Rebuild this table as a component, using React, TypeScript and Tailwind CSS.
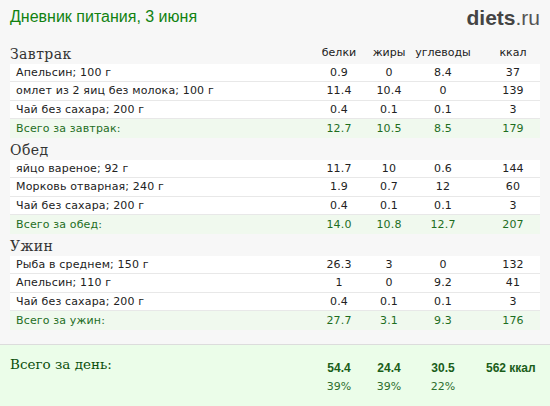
import React from 'react';

type Row = { name: string; p: string; f: string; c: string; k: string };
type Meal = { title: string; rows: Row[]; total: Row };

const meals: Meal[] = [
  {
    title: 'Завтрак',
    rows: [
      { name: 'Апельсин; 100 г', p: '0.9', f: '0', c: '8.4', k: '37' },
      { name: 'омлет из 2 яиц без молока; 100 г', p: '11.4', f: '10.4', c: '0', k: '139' },
      { name: 'Чай без сахара; 200 г', p: '0.4', f: '0.1', c: '0.1', k: '3' },
    ],
    total: { name: 'Всего за завтрак:', p: '12.7', f: '10.5', c: '8.5', k: '179' },
  },
  {
    title: 'Обед',
    rows: [
      { name: 'яйцо вареное; 92 г', p: '11.7', f: '10', c: '0.6', k: '144' },
      { name: 'Морковь отварная; 240 г', p: '1.9', f: '0.7', c: '12', k: '60' },
      { name: 'Чай без сахара; 200 г', p: '0.4', f: '0.1', c: '0.1', k: '3' },
    ],
    total: { name: 'Всего за обед:', p: '14.0', f: '10.8', c: '12.7', k: '207' },
  },
  {
    title: 'Ужин',
    rows: [
      { name: 'Рыба в среднем; 150 г', p: '26.3', f: '3', c: '0', k: '132' },
      { name: 'Апельсин; 110 г', p: '1', f: '0', c: '9.2', k: '41' },
      { name: 'Чай без сахара; 200 г', p: '0.4', f: '0.1', c: '0.1', k: '3' },
    ],
    total: { name: 'Всего за ужин:', p: '27.7', f: '3.1', c: '9.3', k: '176' },
  },
];

const sans = "font-['DejaVu_Sans',Verdana,sans-serif]";
const serif = "font-['DejaVu_Serif',Georgia,serif]";

// shared column widths so header, rows and totals line up
const Cols = ({ p, f, c, k }: { p: React.ReactNode; f: React.ReactNode; c: React.ReactNode; k: React.ReactNode }) => (
  <>
    <div className="w-[50px] text-center">{p}</div>
    <div className="w-[50px] text-center">{f}</div>
    <div className="w-[58px] text-center">{c}</div>
    <div className="w-[68px] pl-[14px] text-center">{k}</div>
  </>
);

const TableRow = ({ row, total }: { row: Row; total?: boolean }) => (
  <div
    className={`flex items-center h-[18.5px] text-[11px] leading-none tracking-[0.15px] ${sans} ${
      total ? 'bg-[#f0f9ee] text-[#1e6e1e]' : 'bg-white text-[#222] border-b border-[#e8e8e8]'
    }`}
  >
    <div className="flex-1 pl-[6px] whitespace-nowrap">{row.name}</div>
    <Cols p={row.p} f={row.f} c={row.c} k={row.k} />
  </div>
);

export default function App() {
  return (
    <div className="w-[550px] h-[406px] bg-[#f7f7f7] flex flex-col overflow-hidden">
      {/* header */}
      <div className="flex items-center justify-between h-[33px] px-[10px] pt-[1px]">
        <div className="font-['Liberation_Sans',Arial,sans-serif] text-[16px] text-[#118211]">
          Дневник питания, 3 июня
        </div>
        <div className="font-['Liberation_Sans',Arial,sans-serif] text-[21px] text-[#444] leading-none">
          <span className="font-bold">diets</span>
          <span className="text-[#555]">.ru</span>
        </div>
      </div>

      {/* meals */}
      <div className="px-[10px]">
        {meals.map((meal, i) => (
          <div key={meal.title}>
            <div className={`flex items-end ${i === 0 ? 'h-[30.7px]' : 'h-[22px]'}`}>
              <div className={`flex-1 ${serif} text-[14px] tracking-[0.4px] leading-[20px] text-[#333]`}>{meal.title}</div>
              {i === 0 && (
                <div className={`flex items-center h-[20px] text-[11px] text-[#222] ${sans}`}>
                  <Cols p="белки" f="жиры" c="углеводы" k="ккал" />
                </div>
              )}
            </div>
            {meal.rows.map((r, j) => (
              <TableRow key={j} row={r} />
            ))}
            <TableRow row={meal.total} total />
          </div>
        ))}
      </div>

      {/* day total */}
      <div className="mt-auto h-[62px] bg-[#ebfde9] border-t border-[#dcdcdc] px-[10px] flex">
        <div className={`flex-1 ${serif} text-[13.5px] text-[#0b4f0b] pt-[9px]`}>Всего за день:</div>
        <div className="flex flex-col pt-[15px]">
          <div className="flex font-['Liberation_Sans',Arial,sans-serif] font-bold text-[12px] text-[#1a5e1a] leading-[16px]">
            <div className="w-[50px] text-center">54.4</div>
            <div className="w-[50px] text-center">24.4</div>
            <div className="w-[58px] text-center">30.5</div>
            <div className="w-[68px] pl-[14px] whitespace-nowrap">562 ккал</div>
          </div>
          <div className={`flex ${sans} text-[11px] text-[#2e6e2e] leading-[16px] mt-[3px]`}>
            <div className="w-[50px] text-center">39%</div>
            <div className="w-[50px] text-center">39%</div>
            <div className="w-[58px] text-center">22%</div>
            <div className="w-[68px]" />
          </div>
        </div>
      </div>
    </div>
  );
}
